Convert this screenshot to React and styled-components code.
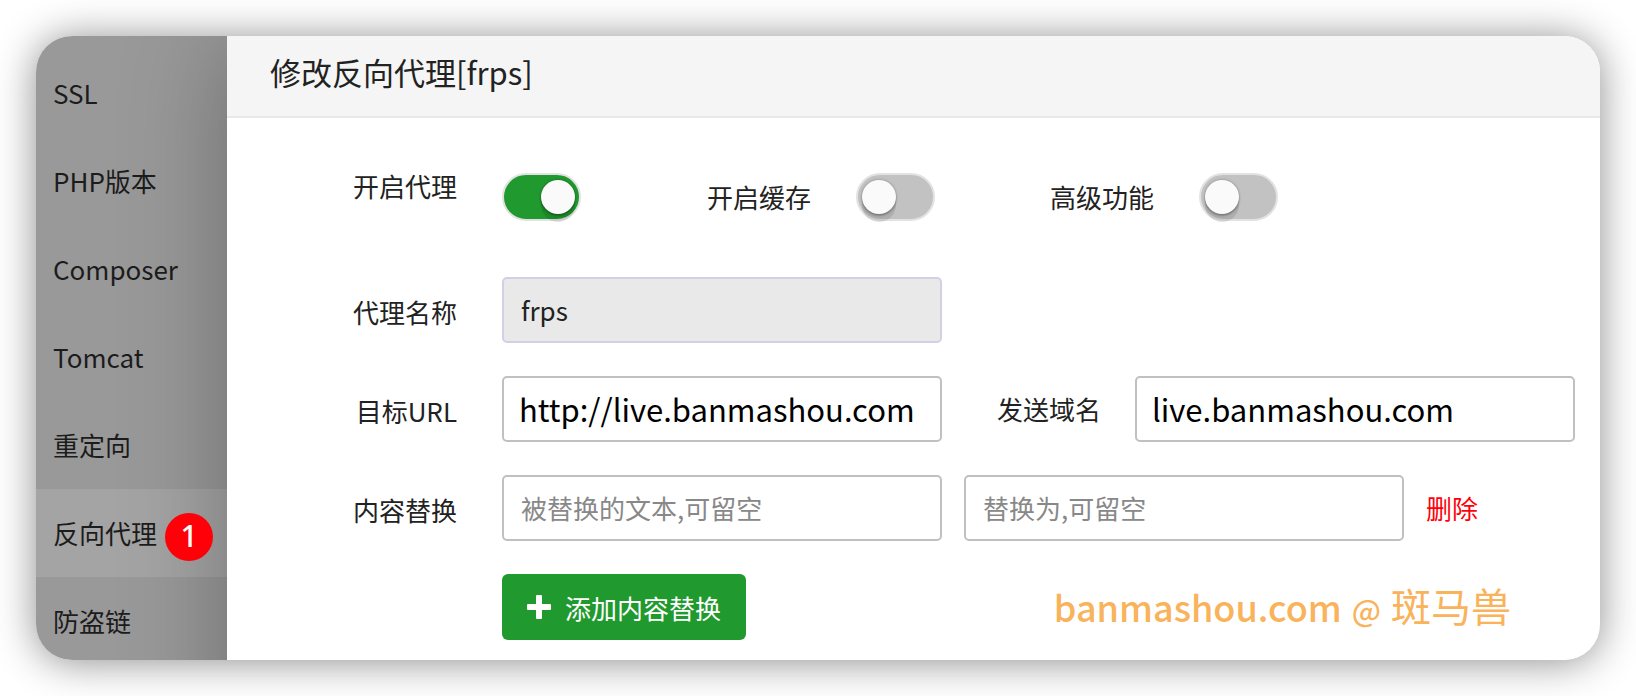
import React, { useState } from "react";
import styled, { createGlobalStyle } from "styled-components";

const GlobalStyle = createGlobalStyle`
  * {
    box-sizing: border-box;
  }

  body {
    margin: 0;
    background-color: #ffffff;
    color: #222222;
    font-family: "Noto Sans CJK SC", sans-serif;
    font-size: 26px;
  }
`;

const Page = styled.div`
  height: 100vh;
  padding: 36px;
`;

const Card = styled.div`
  display: flex;
  height: 100%;
  border-radius: 36px;
  overflow: hidden;
  box-shadow: 0 2px 40px rgba(0, 0, 0, 0.45);
`;

const Sidebar = styled.nav`
  flex: 0 0 191px;
  padding-top: 13px;
  background-color: #999999;
`;

const SidebarItem = styled.a`
  display: flex;
  align-items: center;
  height: 88px;
  padding: 0 0 2px 17px;
  color: #1c1c1c;
  text-decoration: none;
  white-space: nowrap;
  background-color: ${(props) => (props.$active ? "#a4a4a4" : "transparent")};
`;

const SidebarText = styled.span`
  position: relative;
`;

const Badge = styled.span`
  position: absolute;
  z-index: 2;
  top: -1px;
  left: calc(100% + 8px);
  width: 48px;
  height: 48px;
  border-radius: 50%;
  background-color: #ff0008;
  color: #ffffff;
  font-family: "Noto Sans", sans-serif;
  font-size: 30px;
  font-weight: 500;
  line-height: 46px;
  text-align: center;
`;

/* runs past the card so its shadow does not fade at the bottom */
const Dialog = styled.main`
  position: relative;
  flex: 1;
  min-width: 0;
  height: calc(100% + 100px);
  background-color: #ffffff;
  box-shadow: 2px 2px 100px rgba(0, 0, 0, 0.3);
`;

const Title = styled.h1`
  margin: 0;
  padding: 0 43px 8px;
  border-bottom: 2px solid #e8e8e8;
  background-color: #f5f5f5;
  font-size: 31px;
  font-weight: 400;
  line-height: 72px;
`;

const Form = styled.form`
  display: flex;
  flex-direction: column;
  gap: 33px;
  padding: 33px 25px 20px 0;
`;

const Row = styled.div`
  display: flex;
  align-items: center;
`;

const SwitchRow = styled(Row)`
  align-items: flex-start;
  height: 93px;
`;

const Label = styled.label`
  flex: 0 0 230px;
  height: 66px;
  margin-right: 45px;
  line-height: 70px;
  text-align: right;
  white-space: nowrap;
`;

const InlineLabel = styled.label`
  margin: 0 34px 0 55px;
  padding-bottom: 2px;
  white-space: nowrap;
`;

const SwitchGroup = styled.div`
  display: flex;
  align-items: center;
  gap: 45px;
  height: 48px;
  margin: 22px 0 0 ${(props) => props.$space || 0}px;
  white-space: nowrap;
`;

const SwitchLabel = styled.label`
  padding-bottom: 2px;
`;

const Switch = styled.input`
  appearance: none;
  display: flex;
  align-items: center;
  justify-content: ${(props) => (props.checked ? "flex-end" : "flex-start")};
  width: 79px;
  height: 48px;
  margin: 0;
  padding: 0 4px;
  border: 2px solid #e2e2e2;
  border-radius: 24px;
  background-color: ${(props) => (props.checked ? "#20992e" : "#c2c2c2")};

  &::before {
    content: "";
    width: 34px;
    height: 34px;
    border-radius: 50%;
    background-color: #fafafa;
    box-shadow: 0 0 2px 1px rgba(0, 0, 0, 0.15), 0 8px 0 rgba(0, 0, 0, 0.1),
      0 2px 2px rgba(0, 0, 0, 0.2);
  }
`;

const TextInput = styled.input`
  flex: 0 1 440px;
  min-width: 0;
  height: 66px;
  padding: 0 17px 2px;
  border: 2px solid #c0c0c0;
  border-radius: 5px;
  background-color: #ffffff;
  color: #222222;
  font-family: inherit;
  font-size: 26px;

  &::placeholder {
    color: #888888;
  }

  &:disabled {
    border-color: #d2d0e6;
    background-color: #e9e9e9;
  }
`;

const AddressInput = styled(TextInput)`
  padding: 0 15px 2px;
  color: #000000;
  font-size: 31px;
`;

const SecondInput = styled(TextInput)`
  margin-left: 22px;
`;

const DeleteLink = styled.a`
  margin-left: 22px;
  padding-bottom: 2px;
  color: #ff0008;
  text-decoration: none;
  white-space: nowrap;
`;

const AddButton = styled.button`
  display: flex;
  align-items: center;
  gap: 14px;
  height: 66px;
  margin-left: 275px;
  padding: 0 25px;
  border: none;
  border-radius: 6px;
  background-color: #20992e;
  color: #ffffff;
  font-family: inherit;
  font-size: 26px;
  white-space: nowrap;
`;

const Signature = styled.div`
  display: flex;
  align-items: baseline;
  gap: 10px;
  margin: 0 64px 0 auto;
  color: #f8b35b;
  font-size: 36px;
  font-weight: 500;
  line-height: 60px;
  white-space: nowrap;
`;

const SignatureAt = styled.span`
  font-size: 30px;
`;

const SignatureName = styled.span`
  font-size: 40px;
  font-weight: 400;
`;

const menu = ["SSL", "PHP版本", "Composer", "Tomcat", "重定向", "反向代理", "防盗链"];

const PlusIcon = () => (
  <svg width="24" height="24" viewBox="0 0 24 24" fill="#ffffff" aria-hidden="true">
    <rect x="9" y="0" width="6" height="24" rx="1" />
    <rect x="0" y="9" width="24" height="6" rx="1" />
  </svg>
);

function App() {
  const [proxy, setProxy] = useState(true);
  const [cache, setCache] = useState(false);
  const [advanced, setAdvanced] = useState(false);
  const [target, setTarget] = useState("http://live.banmashou.com");
  const [domain, setDomain] = useState("live.banmashou.com");

  return (
    <Page>
      <GlobalStyle />
      <Card>
        <Sidebar>
          {menu.map((name) => (
            <SidebarItem key={name} href="#" $active={name === "反向代理"}>
              <SidebarText>
                {name}
                {name === "反向代理" && <Badge>1</Badge>}
              </SidebarText>
            </SidebarItem>
          ))}
        </Sidebar>

        <Dialog>
          <Title>修改反向代理[frps]</Title>
          <Form>
            <SwitchRow>
              <Label htmlFor="proxy">开启代理</Label>
              <SwitchGroup>
                <Switch
                  id="proxy"
                  type="checkbox"
                  checked={proxy}
                  onChange={() => setProxy(!proxy)}
                />
              </SwitchGroup>
              <SwitchGroup $space={126}>
                <SwitchLabel htmlFor="cache">开启缓存</SwitchLabel>
                <Switch
                  id="cache"
                  type="checkbox"
                  checked={cache}
                  onChange={() => setCache(!cache)}
                />
              </SwitchGroup>
              <SwitchGroup $space={115}>
                <SwitchLabel htmlFor="advanced">高级功能</SwitchLabel>
                <Switch
                  id="advanced"
                  type="checkbox"
                  checked={advanced}
                  onChange={() => setAdvanced(!advanced)}
                />
              </SwitchGroup>
            </SwitchRow>

            <Row>
              <Label htmlFor="name">代理名称</Label>
              <TextInput id="name" type="text" defaultValue="frps" disabled />
            </Row>

            <Row>
              <Label htmlFor="target">目标URL</Label>
              <AddressInput
                id="target"
                type="text"
                value={target}
                onChange={(event) => setTarget(event.target.value)}
              />
              <InlineLabel htmlFor="domain">发送域名</InlineLabel>
              <AddressInput
                id="domain"
                type="text"
                value={domain}
                onChange={(event) => setDomain(event.target.value)}
              />
            </Row>

            <Row>
              <Label htmlFor="from">内容替换</Label>
              <TextInput id="from" type="text" placeholder="被替换的文本,可留空" />
              <SecondInput type="text" placeholder="替换为,可留空" aria-label="替换为" />
              <DeleteLink href="#">删除</DeleteLink>
            </Row>

            <Row>
              <AddButton type="button">
                <PlusIcon />
                添加内容替换
              </AddButton>
              <Signature>
                <span>banmashou.com</span>
                <SignatureAt>@</SignatureAt>
                <SignatureName>斑马兽</SignatureName>
              </Signature>
            </Row>
          </Form>
        </Dialog>
      </Card>
    </Page>
  );
}

export default App;
